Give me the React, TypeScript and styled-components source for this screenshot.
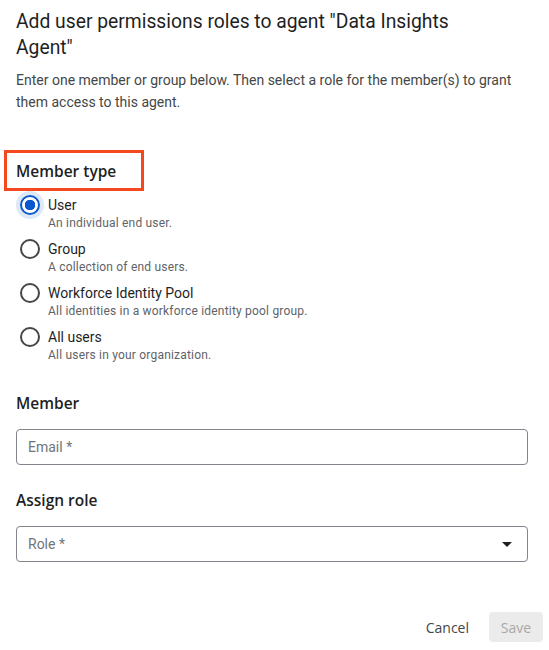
import { FC, useState } from "react";
import styled, { createGlobalStyle } from "styled-components";

const GlobalStyle = createGlobalStyle`
  html, body {
    margin: 0;
    padding: 0;
    background: #fff;
  }
  body {
    font-family: Roboto, "Liberation Sans", sans-serif;
    color: #1f1f1f;
  }
`;

type MemberOption = { id: string; label: string; hint: string };

const OPTIONS: MemberOption[] = [
  { id: "user", label: "User", hint: "An individual end user." },
  { id: "group", label: "Group", hint: "A collection of end users." },
  {
    id: "pool",
    label: "Workforce Identity Pool",
    hint: "All identities in a workforce identity pool group.",
  },
  { id: "all", label: "All users", hint: "All users in your organization." },
];

const App: FC = () => {
  const [memberType, setMemberType] = useState("user");

  return (
    <>
      <GlobalStyle />
      <Dialog>
        <Title>Add user permissions roles to agent "Data Insights Agent"</Title>
        <Description>
          Enter one member or group below. Then select a role for the member(s)
          to grant them access to this agent.
        </Description>

        <Highlight>
          <SectionTitle>Member type</SectionTitle>
        </Highlight>

        <RadioList>
          {OPTIONS.map((opt) => (
            <RadioRow key={opt.id} onClick={() => setMemberType(opt.id)}>
              <RadioCircle $checked={memberType === opt.id} />
              <RadioText>
                <RadioLabel>{opt.label}</RadioLabel>
                <RadioHint>{opt.hint}</RadioHint>
              </RadioText>
            </RadioRow>
          ))}
        </RadioList>

        <FieldTitle $top={28}>Member</FieldTitle>
        <Field>
          <Placeholder>Email *</Placeholder>
        </Field>

        <FieldTitle $top={23}>Assign role</FieldTitle>
        <Field>
          <Placeholder>Role *</Placeholder>
          <Caret viewBox="0 0 24 24">
            <path d="M7 10l5 5 5-5z" />
          </Caret>
        </Field>

        <Footer>
          <TextButton>Cancel</TextButton>
          <FilledButton disabled>Save</FilledButton>
        </Footer>
      </Dialog>
    </>
  );
};

export default App;

const Dialog = styled.div`
  width: 549px;
  box-sizing: border-box;
  padding: 9px 21px 6px 16px;
  display: flex;
  flex-direction: column;
`;

const Title = styled.h1`
  margin: 0;
  font-size: 19.3px;
  font-weight: 400;
  line-height: 26px;
  color: #1f1f1f;
  max-width: 470px;
`;

const Description = styled.p`
  margin: 8px 0 0;
  font-size: 14px;
  line-height: 22px;
  color: #444746;
`;

const Highlight = styled.div`
  align-self: flex-start;
  box-sizing: border-box;
  width: 140px;
  height: 41px;
  margin: 37px 0 0 -12px;
  border: 3px solid #f4481e;
  padding-left: 9px;
  display: flex;
  align-items: center;
`;

const SectionTitle = styled.h2`
  margin: 0;
  font-family: "Open Sans", Roboto, sans-serif;
  font-size: 15.5px;
  font-weight: 600;
  line-height: 24px;
  color: #1f1f1f;
`;

const RadioList = styled.div`
  display: flex;
  flex-direction: column;
  gap: 8px;
  margin-top: 4px;
`;

const RadioRow = styled.label`
  display: flex;
  align-items: flex-start;
  gap: 8px;
  padding-left: 4px;
  cursor: pointer;
`;

const RadioCircle = styled.span<{ $checked: boolean }>`
  flex: none;
  box-sizing: border-box;
  width: 20px;
  height: 20px;
  border-radius: 50%;
  border: 2px solid ${(p) => (p.$checked ? "#0b57d0" : "#444746")};
  background: ${(p) =>
    p.$checked ? "radial-gradient(circle, #0b57d0 0 5px, #fff 5.5px)" : "#fff"};
  box-shadow: ${(p) => (p.$checked ? "0 0 0 4px #dfe8f7" : "none")};
`;

const RadioText = styled.div`
  display: flex;
  flex-direction: column;
`;

const RadioLabel = styled.span`
  font-size: 14px;
  line-height: 20px;
  color: #1f1f1f;
`;

const RadioHint = styled.span`
  font-size: 12px;
  line-height: 16px;
  letter-spacing: 0.2px;
  color: #5f6368;
`;

const FieldTitle = styled.h3<{ $top: number }>`
  margin: ${(p) => p.$top}px 0 0;
  font-family: "Open Sans", Roboto, sans-serif;
  font-size: 15.5px;
  font-weight: 600;
  line-height: 24px;
  color: #1f1f1f;
`;

const Field = styled.div`
  margin-top: 14px;
  height: 36px;
  box-sizing: border-box;
  border: 1px solid #80868b;
  border-radius: 4px;
  padding: 0 12px 0 11px;
  display: flex;
  align-items: center;
  justify-content: space-between;
`;

const Placeholder = styled.span`
  font-size: 14px;
  color: #70757a;
`;

const Caret = styled.svg`
  width: 24px;
  height: 24px;
  fill: #1f1f1f;
  margin-right: -4px;
`;

const Footer = styled.div`
  margin: 50px -15px 0 0;
  display: flex;
  justify-content: flex-end;
  align-items: center;
  gap: 8px;
`;

const TextButton = styled.button`
  border: none;
  background: none;
  font-family: "Open Sans", Roboto, sans-serif;
  font-size: 14px;
  font-weight: 500;
  color: #444746;
  height: 30px;
  padding: 0 12px;
  cursor: pointer;
`;

const FilledButton = styled.button`
  border: none;
  border-radius: 4px;
  background: #ebebeb;
  font-family: "Open Sans", Roboto, sans-serif;
  font-size: 14px;
  font-weight: 500;
  color: #a8a8a8;
  height: 30px;
  width: 54px;
  padding: 0;
`;
